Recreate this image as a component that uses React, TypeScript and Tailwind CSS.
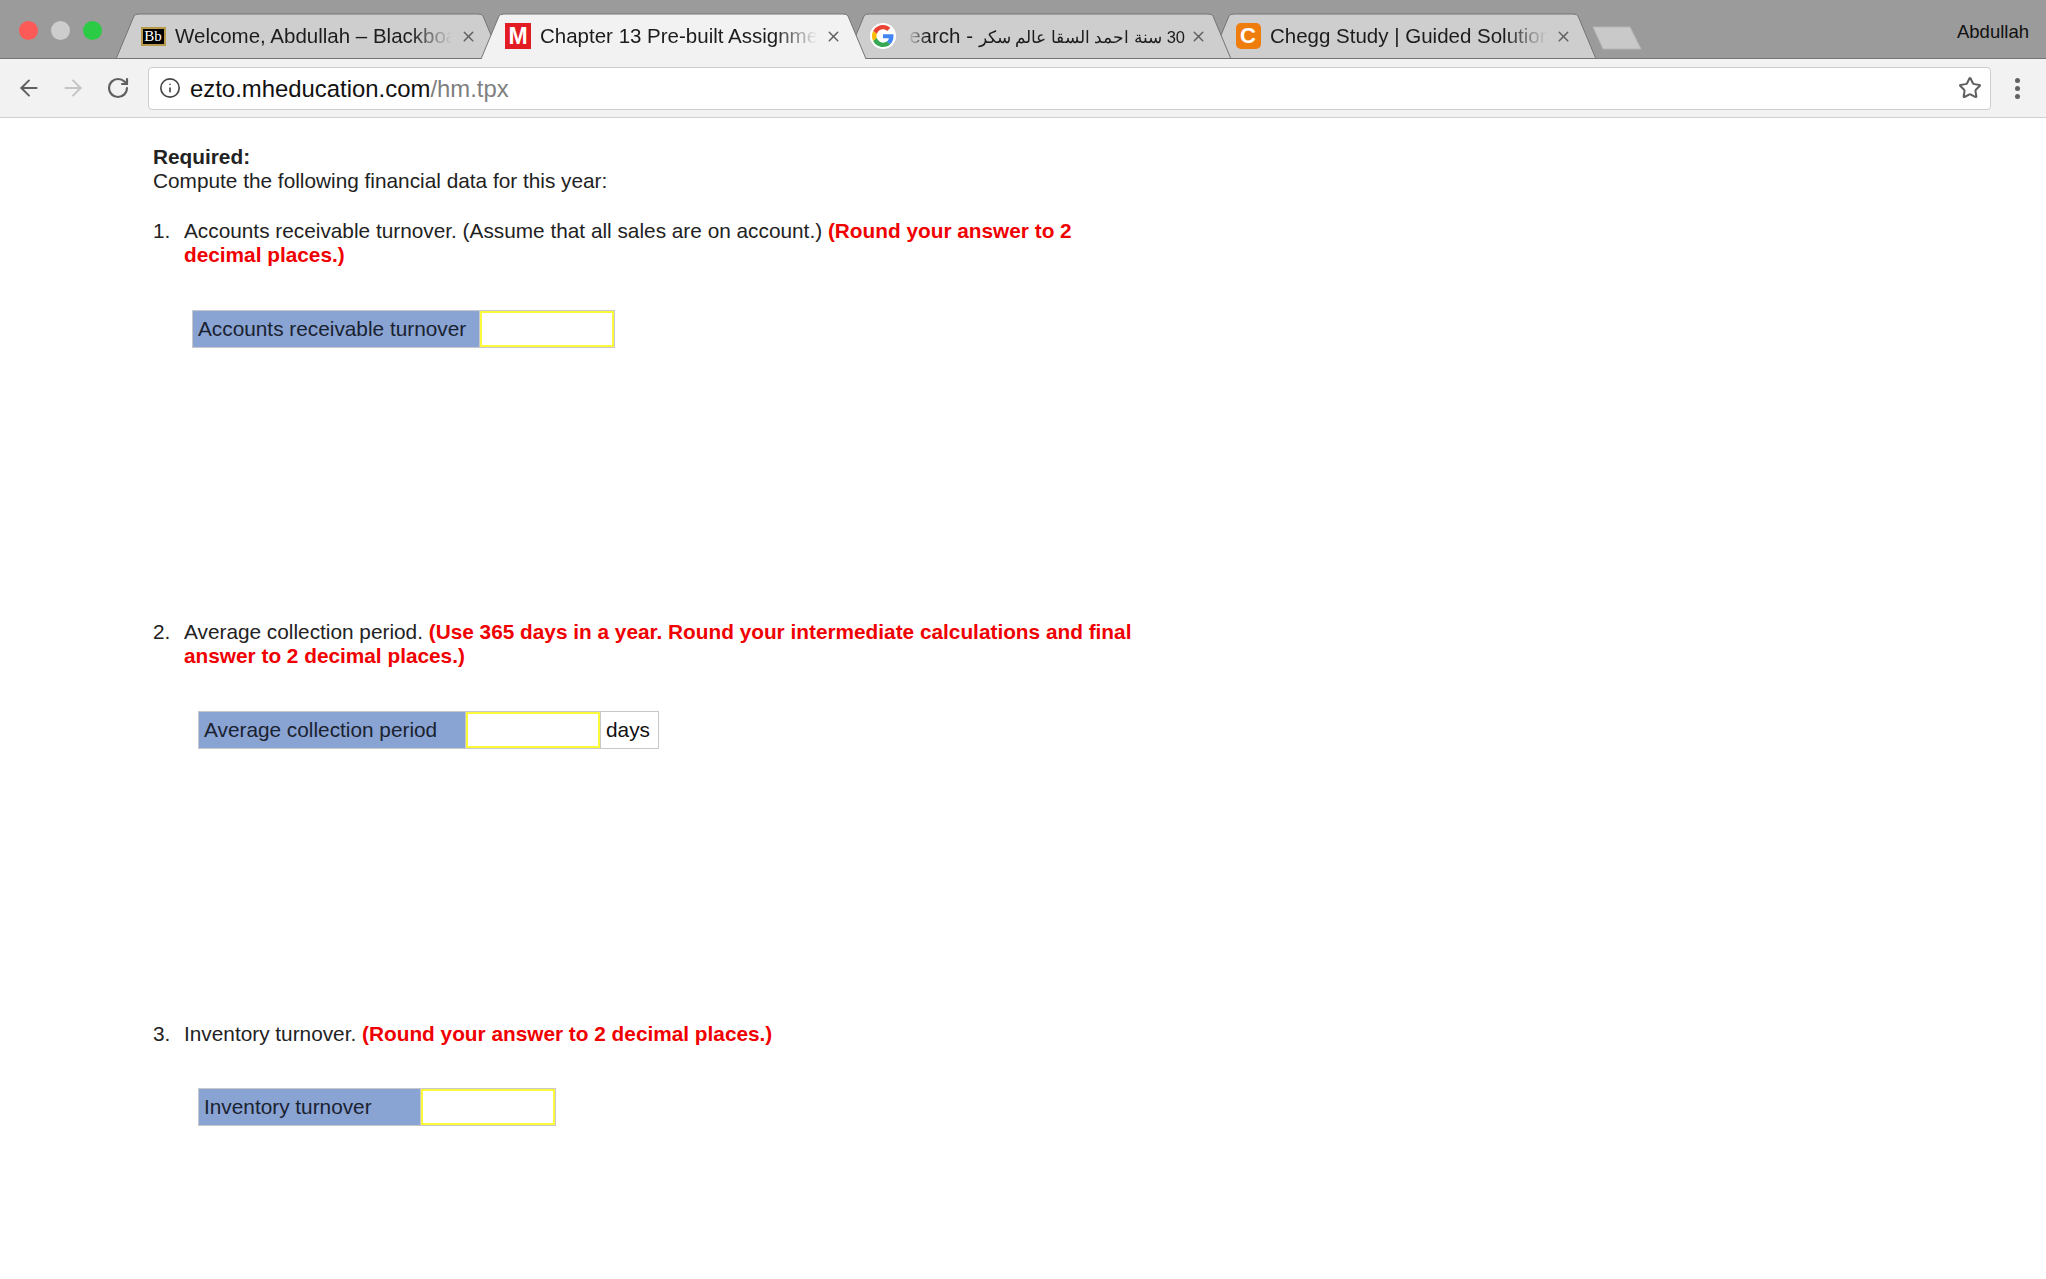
import React from 'react';
import { ArrowLeft, ArrowRight, Info, RotateCw, Star, X } from 'lucide-react';

function TabShape({ active }: { active?: boolean }) {
    const fill = active ? '#f2f2f2' : '#cecece';
    return (
        <svg className="absolute inset-0 w-full h-full" viewBox="0 0 385 46" preserveAspectRatio="none">
            <path d="M0 46 L18 3 Q19 1 23 1 L362 1 Q366 1 367 3 L385 46 Z" fill={fill} />
            <path d="M0 46 L18 3 Q19 1 23 1 L362 1 Q366 1 367 3 L385 46" fill="none" stroke="#757575" strokeWidth="1" />
            {!active && <path d="M0 45.500 L385 45.500" stroke="#757575" strokeWidth="1" />}
        </svg>
    );
}

function Tab({ icon, children, active, rtl, stack }: { icon: React.ReactNode; children: React.ReactNode; active?: boolean; rtl?: boolean; stack: string }) {
    return (
        <div className={`relative h-[46px] w-[385px] shrink-0 -mr-[20px] ${stack}`}>
            <TabShape active={active} />
            <div className="relative h-full flex items-center pl-[24px] pr-[24px]">
                <div className="w-[26px] h-[26px] flex items-center justify-center shrink-0">{icon}</div>
                <div
                    dir={rtl ? 'rtl' : 'ltr'}
                    className={`w-[280px] ml-[9px] overflow-hidden whitespace-nowrap text-[20.5px] text-[#1c1c1c] ${rtl ? '[mask-image:linear-gradient(to_right,transparent_1%,black_8%)]' : '[mask-image:linear-gradient(to_right,black_84%,transparent_99%)]'}`}
                >
                    {children}
                </div>
                <X className="ml-auto w-[17px] h-[17px] text-[#5f5f5f] shrink-0" strokeWidth={2} />
            </div>
        </div>
    );
}

function BlackboardIcon() {
    return (
        <div className="w-[25px] h-[19px] bg-black border-2 border-[#b89a4a] flex items-center justify-center text-white text-[15px] leading-none font-['Liberation_Serif',serif]">
            Bb
        </div>
    );
}

function McGrawIcon() {
    return <div className="w-[26px] h-[26px] bg-[#e31b23] flex items-center justify-center text-white text-[23px] leading-none font-bold">M</div>;
}

function GoogleIcon() {
    return (
        <div className="w-[26px] h-[26px] rounded-full bg-white flex items-center justify-center">
            <svg viewBox="0 0 48 48" className="w-[22px] h-[22px]">
                <path fill="#EA4335" d="M24 9.5c3.5 0 6.7 1.2 9.2 3.6l6.9-6.9C35.9 2.4 30.5 0 24 0 14.6 0 6.5 5.4 2.6 13.2l8 6.2C12.5 13.7 17.8 9.5 24 9.5z" />
                <path fill="#4285F4" d="M46.9 24.5c0-1.6-.1-3.1-.4-4.5H24v9h12.9c-.6 3-2.2 5.500-4.800 7.200l7.700 6c4.500-4.200 7.100-10.300 7.100-17.700z" />
                <path fill="#FBBC05" d="M10.600 28.600c-.5-1.400-.8-3-.8-4.600s.3-3.200.8-4.600l-8-6.200C.9 16.500 0 20.100 0 24s.9 7.500 2.600 10.800l8-6.200z" />
                <path fill="#34A853" d="M24 48c6.500 0 11.900-2.100 15.900-5.800l-7.700-6c-2.200 1.500-4.900 2.300-8.200 2.300-6.200 0-11.500-4.200-13.400-9.900l-8 6.200C6.500 42.600 14.600 48 24 48z" />
            </svg>
        </div>
    );
}

function CheggIcon() {
    return <div className="w-[25px] h-[26px] rounded-[5px] bg-[#ef7d0d] flex items-center justify-center text-white text-[22px] leading-none font-bold">C</div>;
}

function BrowserChrome() {
    return (
        <div>
            <div className="h-[59px] bg-[#9b9b9b] flex items-end relative border-b border-[#757575]">
                <div className="absolute left-[19px] top-[21px] flex gap-[13px]">
                    <div className="w-[19px] h-[19px] rounded-full bg-[#fc5a56]" />
                    <div className="w-[19px] h-[19px] rounded-full bg-[#cdcdcd]" />
                    <div className="w-[19px] h-[19px] rounded-full bg-[#2ccb45]" />
                </div>
                <div className="flex items-end pl-[116px] -mb-px">
                    <Tab stack="z-[2]" icon={<BlackboardIcon />}>Welcome, Abdullah – Blackboard Learn</Tab>
                    <Tab stack="z-10" active icon={<McGrawIcon />}>Chapter 13 Pre-built Assignment</Tab>
                    <Tab stack="z-[2]" rtl icon={<GoogleIcon />}>
                        <span className="text-[16.500px]">30 سنة احمد السقا عالم سكر</span> - Google Search
                    </Tab>
                    <Tab stack="z-[1]" icon={<CheggIcon />}>Chegg Study | Guided Solutions</Tab>
                    <svg viewBox="0 0 50 24" className="w-[50px] h-[24px] ml-[16px] mb-[9px]">
                        <path d="M1 1 L38 1 L49 23 L11 23 Z" fill="#c9c9c9" stroke="#b5b5b5" strokeLinejoin="round" />
                    </svg>
                </div>
                <div className="absolute right-[17px] top-[20px] text-[18.500px] leading-[24px] text-[#111]">Abdullah</div>
            </div>
            <div className="h-[59px] bg-[#f2f2f2] border-b border-[#cfcfcf] flex items-center">
                <div className="w-[148px] flex items-center shrink-0 pl-[16px]">
                    <ArrowLeft className="w-[26px] h-[26px] text-[#5f5f5f]" strokeWidth={1.8} />
                    <ArrowRight className="ml-[18px] w-[26px] h-[26px] text-[#c4c4c4]" strokeWidth={1.8} />
                    <RotateCw className="ml-[20px] w-[24px] h-[24px] text-[#5f5f5f]" strokeWidth={2.2} />
                </div>
                <div className="w-[1843px] h-[43px] bg-white border border-[#cdcdcd] rounded-[4px] flex items-center pl-[10px] pr-[8px]">
                    <Info className="w-[22px] h-[22px] text-[#444]" strokeWidth={1.8} />
                    <div className="ml-[9px] pt-[1px] text-[23.900px] text-[#111]">
                        ezto.mheducation.com<span className="text-[#7f7f7f]">/hm.tpx</span>
                    </div>
                    <Star className="ml-auto w-[24px] h-[24px] text-[#5f5f5f]" strokeWidth={2} />
                </div>
                <div className="flex-1 flex flex-col items-center gap-[3px] pr-[2px]">
                    <div className="w-[5px] h-[5px] rounded-full bg-[#616161]" />
                    <div className="w-[5px] h-[5px] rounded-full bg-[#616161]" />
                    <div className="w-[5px] h-[5px] rounded-full bg-[#616161]" />
                </div>
            </div>
        </div>
    );
}

function AnswerRow({ label, labelWidth, unit }: { label: string; labelWidth: string; unit?: string }) {
    return (
        <div className="inline-flex h-[38px] border border-[#c8c8cc] text-[20.800px] text-[#1a2230]">
            <div className={`${labelWidth} bg-[#89a3d3] pl-[5px] flex items-center border-r border-[#c8c8cc]`}>{label}</div>
            <div className="w-[134px] bg-white border-2 border-[#fafa3a]" />
            {unit && <div className="w-[58px] bg-white pl-[5px] flex items-center text-[#111] border-l border-[#c8c8cc]">{unit}</div>}
        </div>
    );
}

function Question({ num, children }: { num: string; children: React.ReactNode }) {
    return (
        <div className="flex w-[1000px]">
            <div className="w-[31px] shrink-0">{num}</div>
            <div className="flex-1">{children}</div>
        </div>
    );
}

export default function App() {
    return (
        <div className="w-[2046px] h-[1279px] bg-white overflow-hidden font-['Liberation_Sans',Arial,sans-serif]">
            <BrowserChrome />
            <div className="pl-[153px] pt-[27px] text-[20.800px] leading-[24px] text-[#222]">
                <p className="font-bold">Required:</p>
                <p>Compute the following financial data for this year:</p>

                <div className="mt-[26px]">
                    <Question num="1.">
                        Accounts receivable turnover. (Assume that all sales are on account.){' '}
                        <strong className="text-[#f00000]">(Round your answer to 2 decimal places.)</strong>
                    </Question>
                </div>
                <div className="mt-[43px] ml-[39px] h-[38px]">
                    <AnswerRow label="Accounts receivable turnover" labelWidth="w-[287px]" />
                </div>

                <div className="mt-[272px]">
                    <Question num="2.">
                        Average collection period.{' '}
                        <strong className="text-[#f00000]">(Use 365 days in a year. Round your intermediate calculations and final answer to 2 decimal places.)</strong>
                    </Question>
                </div>
                <div className="mt-[43px] ml-[45px] h-[38px]">
                    <AnswerRow label="Average collection period" labelWidth="w-[267px]" unit="days" />
                </div>

                <div className="mt-[273px]">
                    <Question num="3.">
                        Inventory turnover. <strong className="text-[#f00000]">(Round your answer to 2 decimal places.)</strong>
                    </Question>
                </div>
                <div className="mt-[42px] ml-[45px] h-[38px]">
                    <AnswerRow label="Inventory turnover" labelWidth="w-[222px]" />
                </div>
            </div>
        </div>
    );
}
